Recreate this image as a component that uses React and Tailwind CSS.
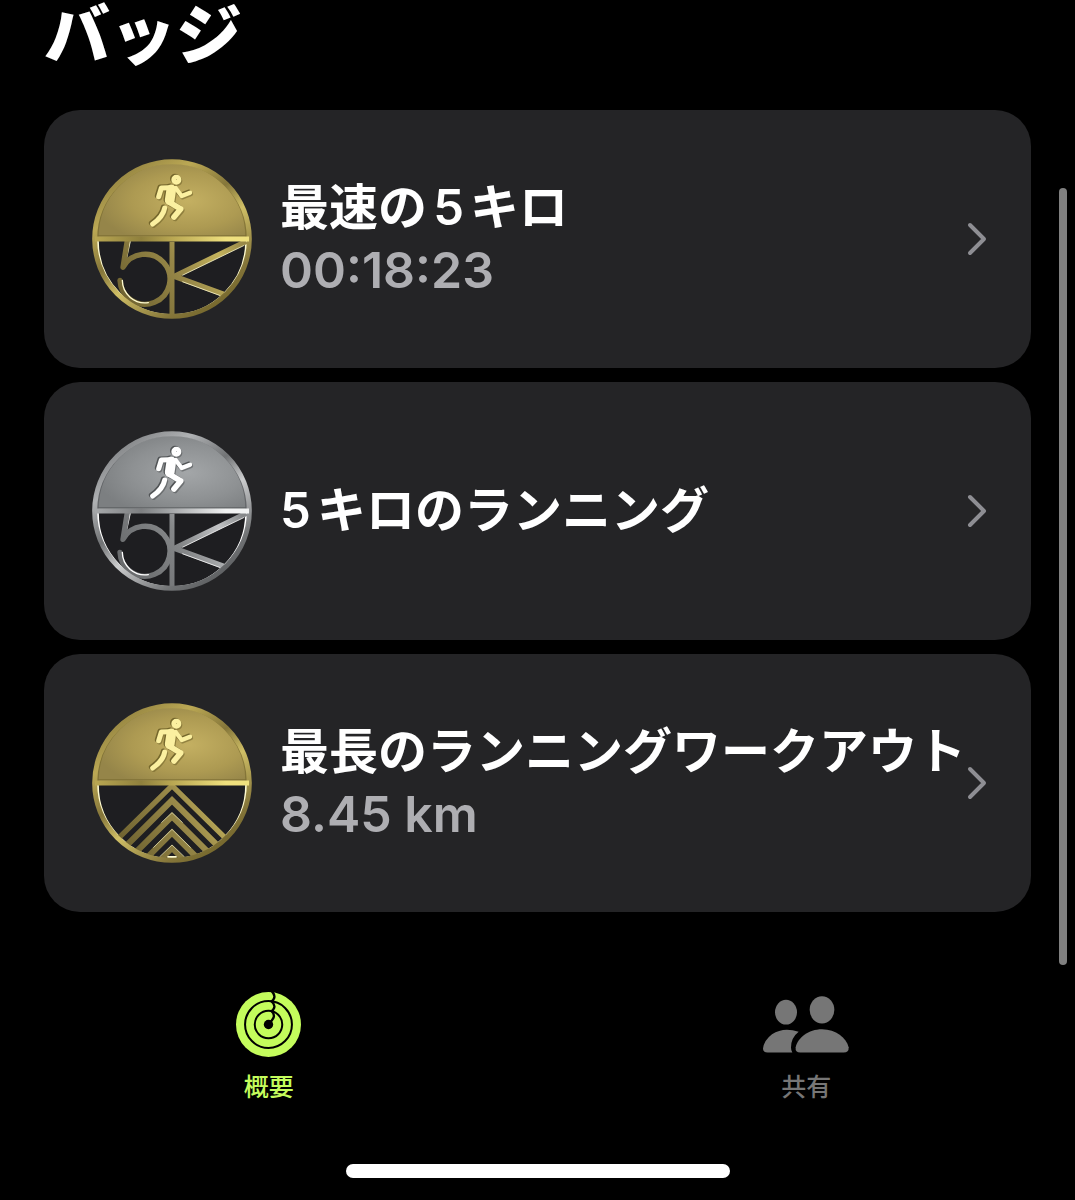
import React, { useId } from 'react';

const badges = [
  { id: 'fastest-5k', title: '最速の5キロ', detail: '00:18:23', tone: 'gold', art: '5k' },
  { id: 'run-5k', title: '5キロのランニング', detail: null, tone: 'silver', art: '5k' },
  { id: 'longest-run', title: '最長のランニングワークアウト', detail: '8.45 km', tone: 'gold', art: 'peaks' },
];

const tones = {
  gold: {
    rim: ['#bba854', '#85763a', '#d0bf66', '#6f6228'],
    face: ['#958549', '#c4b062', '#ad9a52'],
    bar: ['#8f803d', '#efe07e', '#b9a752'],
    runner: '#fbf0a0',
    edge: '#75672c',
    shine: '#fffbd0',
    line: ['#6e6230', '#c4b35c', '#988848'],
  },
  silver: {
    rim: ['#afb1b3', '#717375', '#cccdce', '#57595b'],
    face: ['#7c7f81', '#a3a6a8', '#8e9193'],
    bar: ['#7d7f81', '#f1f2f2', '#a6a8aa'],
    runner: '#ffffff',
    edge: '#515456',
    shine: '#ffffff',
    line: ['#66686a', '#c2c4c6', '#858789'],
  },
};

const Runner = () => (
  <g fill="none" strokeLinecap="round" strokeLinejoin="round">
    <path d="M262 118 L239 119 L231 145" strokeWidth="15" />
    <path d="M269 123 L264 156" strokeWidth="29" />
    <path d="M282 119 L300 143 L325 133" strokeWidth="13" />
    <path d="M264 162 L297 182 L277 206" strokeWidth="17" />
    <path d="M249 179 Q244 206 213 227" strokeWidth="15" />
    <circle cx="284" cy="94" r="7" strokeWidth="16" />
  </g>
);

const BadgeArt = ({ tone, art }) => {
  const id = useId();
  const c = tones[tone];

  return (
    <svg viewBox="31 32 480 480" className="size-40 shrink-0" aria-hidden="true">
      <defs>
        <linearGradient id={`${id}rim`} x1="0.1" y1="0" x2="0.8" y2="1">
          <stop offset="0" stopColor={c.rim[1]} />
          <stop offset="0.25" stopColor={c.rim[0]} />
          <stop offset="0.45" stopColor={c.rim[1]} />
          <stop offset="0.6" stopColor={c.rim[2]} />
          <stop offset="0.85" stopColor={c.rim[1]} />
          <stop offset="1" stopColor={c.rim[3]} />
        </linearGradient>
        <radialGradient id={`${id}face`} cx="0.6" cy="0.5" r="0.6">
          <stop offset="0" stopColor={c.face[1]} />
          <stop offset="0.6" stopColor={c.face[2]} />
          <stop offset="1" stopColor={c.face[0]} />
        </radialGradient>
        <linearGradient id={`${id}bar`} gradientUnits="userSpaceOnUse" x1="40" y1="0" x2="502" y2="0">
          <stop offset="0" stopColor={c.bar[2]} />
          <stop offset="0.3" stopColor={c.bar[0]} />
          <stop offset="0.5" stopColor={c.bar[2]} />
          <stop offset="0.85" stopColor={c.bar[1]} />
          <stop offset="1" stopColor={c.bar[1]} />
        </linearGradient>
        <linearGradient id={`${id}line`} gradientUnits="userSpaceOnUse" x1="140" y1="490" x2="480" y2="280">
          <stop offset="0" stopColor={c.line[0]} />
          <stop offset="0.5" stopColor={c.line[2]} />
          <stop offset="0.8" stopColor={c.line[1]} />
          <stop offset="1" stopColor={c.line[2]} />
        </linearGradient>
        <clipPath id={`${id}disc`}>
          <circle cx="271" cy="272" r="234" />
        </clipPath>
      </defs>

      <circle cx="271" cy="272" r="236" fill="#1e1e21" />
      <path d="M41 272 A230 230 0 0 1 501 272 Z" fill={`url(#${id}face)`} />
      <path d="M48 266 A223 223 0 0 1 494 266" fill="none" stroke={c.edge} strokeWidth="6" opacity="0.6" />
      <path d="M48 278 A223 223 0 0 0 494 278" fill="none" stroke={c.shine} strokeWidth="7" />

      <g clipPath={`url(#${id}disc)`} fill="none" stroke={`url(#${id}line)`} strokeWidth="16">
        {art === '5k' ? (
          <>
            <path d="M145 278 L132 338" stroke={c.shine} strokeWidth="5" />
            <path d="M137 276 L124 357 A75 75 0 1 1 115 396" strokeLinecap="round" strokeLinejoin="round" />
            <path d="M122 396 A68 68 0 0 0 200 463" stroke={c.shine} strokeWidth="4" strokeLinecap="round" />
            <path d="M271 280 V506" strokeWidth="15" />
            <path d="M494 279 L278 384 L426 438" />
            <path d="M488 291 L302 381 M302 400 L416 442" stroke={c.shine} strokeWidth="3" opacity="0.8" />
          </>
        ) : (
          <>
            <path d="M100 448 L271 280 L442 448" />
            <path d="M100 494 L271 324 L442 494" strokeWidth="18" />
            <path d="M100 542 L271 372 L442 542" strokeWidth="18" />
            <path d="M100 592 L271 421 L442 592" strokeWidth="18" />
            <path d="M211 528 L271 468 L331 528" strokeWidth="16" />
            <path d="M239 391 L271 361 L303 391 M215 466 L271 411 L327 466 M233 494 L271 458 L309 494" stroke={c.shine} strokeWidth="3" opacity="0.6" />
            <path d="M257 494 H285" stroke={c.shine} strokeWidth="6" />
          </>
        )}
      </g>

      <circle cx="271" cy="272" r="232" fill="none" stroke={`url(#${id}rim)`} strokeWidth="15" />
      <path d="M40 272 H502" stroke={`url(#${id}bar)`} strokeWidth="15" />
      <path d="M50 262 H492" stroke={c.edge} strokeWidth="3" opacity="0.6" />

      <g stroke={c.edge} transform="translate(-4 -3)">
        <Runner />
      </g>
      <g stroke={c.edge} opacity="0.6" transform="translate(3 4)">
        <Runner />
      </g>
      <g stroke={c.runner}>
        <Runner />
      </g>
    </svg>
  );
};

const Chevron = () => (
  <svg viewBox="0 0 20 34" className="h-[34px] w-5 shrink-0" fill="none" stroke="#8e8e93" strokeWidth="4" strokeLinecap="round" strokeLinejoin="round" aria-hidden="true">
    <path d="M3 3 L17 17 L3 31" />
  </svg>
);

const RingsIcon = () => (
  <svg viewBox="0 0 194 194" className="size-[65px]" aria-hidden="true">
    <circle cx="97" cy="97" r="97" fill="#c4fc5c" />
    <g fill="none" stroke="#000" strokeWidth="6">
      <circle cx="97" cy="97" r="70" />
      <circle cx="97" cy="97" r="41" />
      <path d="M107 -2 Q117 8 114 18 Q111 26 106 28 Q117 37 114 47 Q111 55 106 57 Q116 66 112 77 Q108 86 99 92" strokeWidth="7" />
    </g>
    <circle cx="97" cy="97" r="14" fill="#000" />
  </svg>
);

const PeopleIcon = () => (
  <svg viewBox="0 0 258 170" className="h-[57px] w-[86px]" fill="#767676" aria-hidden="true">
    <ellipse cx="69" cy="48" rx="33" ry="37" />
    <ellipse cx="177" cy="41" rx="37" ry="41" />
    <path d="M107 107 Q84 125 84 154 Q84 163 88 169 H14 Q0 169 0 157 Q3 132 27 114 Q62 91 107 107 Z" />
    <path d="M177 99 C219 99 250 125 257 153 Q258 169 242 169 H112 Q96 169 98 153 C104 125 136 99 177 99 Z" />
  </svg>
);

const App = () => {
  return (
    <div lang="ja" className="relative flex min-h-screen flex-col overflow-hidden bg-black font-['Inter','Noto_Sans_CJK_JP',sans-serif] text-white">
      <main className="px-11">
        <h1 className="pb-10 text-[66px] leading-[70px] font-black">バッジ</h1>

        <ul className="flex flex-col gap-[14px]">
          {badges.map((badge) => (
            <li key={badge.id}>
              <a href={`#${badge.id}`} className="flex items-center rounded-[36px] bg-[#242426] py-[49px] pr-11 pl-12">
                <BadgeArt tone={badge.tone} art={badge.art} />
                <div className="min-w-0 flex-1 pl-7 whitespace-nowrap">
                  <p className="text-[49px] leading-[62px] font-semibold [text-autospace:normal]">{badge.title}</p>
                  {badge.detail && (
                    <p className="text-[50px] leading-[62px] font-semibold text-[#aeaeb2]">{badge.detail}</p>
                  )}
                </div>
                <Chevron />
              </a>
            </li>
          ))}
        </ul>
      </main>

      {/* Tab bar */}
      <nav className="mt-20 grid grid-cols-2 text-[25px] leading-8 font-medium">
        <a href="#summary" aria-current="page" className="flex flex-col items-center gap-[14px] text-[#c4fc5c]">
          <RingsIcon />
          概要
        </a>
        <a href="#sharing" className="flex flex-col items-center gap-[14px] text-[#767676]">
          <span className="flex h-[65px] items-center">
            <PeopleIcon />
          </span>
          共有
        </a>
      </nav>

      {/* Home indicator */}
      <div className="mx-auto mt-auto mb-[22px] h-[14px] w-96 rounded-full bg-white" />

      {/* Scroll thumb */}
      <div className="absolute top-[188px] right-2 h-[777px] w-2 rounded-full bg-[#808080]" />
    </div>
  );
};

export default App;
